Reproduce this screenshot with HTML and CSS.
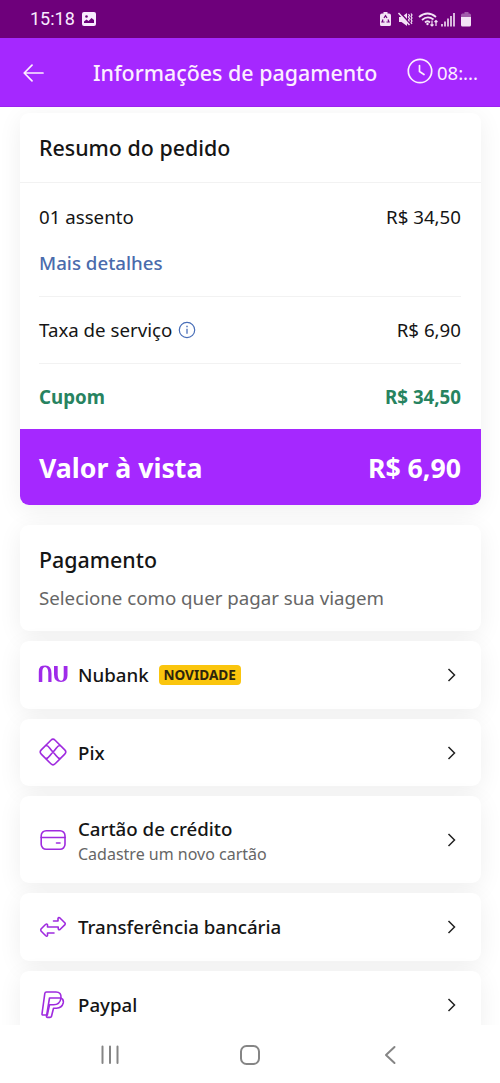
FILE: index.html
```html
<!DOCTYPE html>
<html lang="pt-BR">
<head>
<meta charset="utf-8">
<title>Informações de pagamento</title>
<link rel="stylesheet" href="styles.css">
</head>
<body>
<div class="screen">
  <header class="status">
    <span class="time">15:18</span>
    <svg class="gallery" width="14" height="14" viewBox="0 0 14 14"><rect width="14" height="14" rx="2" fill="#f8eaff"/><circle cx="4.5" cy="4.5" r="1.3" fill="#6e007b"/><path d="M2 11V9.500L4.500 7.500L6.500 9L9.500 6L12 8V11Z" fill="#6e007b"/></svg>
    <svg class="indicators" width="94" height="18" viewBox="0 0 94 18" fill="none" stroke="#f3e3f6">
      <path d="M3 2.500H4.500V1H8.500V2.500H10Q12 2.500 12 4.500V13.500Q12 15 10.500 15H2.500Q1 15 1 13.500V4.500Q1 2.500 3 2.500Z" fill="#f3e3f6" stroke="none"/>
      <path d="M5 7L6.500 4.700L8 7M9 8.500L10 11H7.500M5.500 11H3L4 8.500" stroke="#6e007b" stroke-width="1.200"/>
      <path d="M20 6H22.500L28 2V15L22.500 11H20Z" fill="#f3e3f6" stroke="none"/><path d="M20.500 1L32 13.500" stroke="#6e007b" stroke-width="1.800"/><path d="M19.500 2L30.500 14" stroke-width="1.500"/><path d="M29.500 3L30.500 4.500L29.500 6L30.500 7.500L29.500 9L30.500 10.500M32 2.500L33 4L32 5.500L33 7L32 8.500L33 10L32 11.500L33 13" stroke-width="1.200"/>
      <path d="M40 6Q48.500-1 57 6M43 9Q48.500 4 54.500 8.500M46 11.500Q48.500 9 51 11.500" stroke-width="1.800"/><circle cx="48.500" cy="13" r="1.200" fill="#f3e3f6" stroke="none"/><path d="M53 9.500V15M51.500 13.500L53 15L54.500 13.500M57 15V9.500M55.500 11L57 9.500L58.500 11" stroke-width="1.200"/>
      <path d="M63 13V15.500M66 10.500V15.500M69 7.500V15.500M72 5V15.500M75 2V15.500" stroke-width="1.600"/>
      <path d="M83.500 2.500H85.500V1H89.500V2.500H90.500Q92 2.500 92 4V6H82V4Q82 2.500 83.500 2.500Z" fill="#a15aab" stroke="none"/><path d="M82 6H92V14Q92 15.500 90.500 15.500H83.500Q82 15.500 82 14Z" fill="#f3e3f6" stroke="none"/>
    </svg>
  </header>
  <div class="appbar">
    <svg class="back" width="22" height="18" viewBox="0 0 22 18" fill="none" stroke="#fceeff" stroke-width="1.700" stroke-linecap="round" stroke-linejoin="round"><path d="M20 9H1.500M9 1.200L1.200 9L9 16.800"/></svg>
    <h1 class="title">Informações de pagamento</h1>
    <svg class="clock" width="26" height="26" viewBox="0 0 26 26" fill="none" stroke="#fceeff" stroke-width="1.700" stroke-linecap="round" stroke-linejoin="round"><circle cx="13" cy="13" r="11.700"/><path d="M12.500 7.500V13.500L17 16.500"/></svg>
    <span class="timer">08:...</span>
  </div>
  <main class="content">
    <section class="card summary">
      <h2 class="heading">Resumo do pedido</h2>
      <div class="lines">
        <div class="line seat">
          <div class="row"><span>01 assento</span><span>R$ 34,50</span></div>
          <a class="details">Mais detalhes</a>
        </div>
        <div class="line row fee"><span class="label">Taxa de serviço
          <svg width="18" height="18" viewBox="0 0 18 18" fill="none" stroke="#4a6fb8"><circle cx="9" cy="9" r="7.700" stroke-width="1.200"/><path d="M9 7.800V12.800" stroke-width="1.300"/><path d="M9 4.800V6.200" stroke-width="1.400"/></svg></span><span>R$ 6,90</span></div>
        <div class="line row coupon"><span>Cupom</span><span>R$ 34,50</span></div>
      </div>
      <div class="total row"><span>Valor à vista</span><span>R$ 6,90</span></div>
    </section>
    <section class="card intro">
      <h2 class="heading-plain">Pagamento</h2>
      <p class="hint">Selecione como quer pagar sua viagem</p>
    </section>
    <div class="methods">
      <div class="card method">
        <svg class="icon" width="30" height="30" viewBox="0 0 30 30" fill="#9f2be9"><path d="M.8 22V12Q.8 8 2.500 6.500Q4 5.500 7.500 5.500Q13.500 5.500 13.500 13.500V22H10.300V12.500Q10 7.300 7 7Q4.300 7.500 4.300 12V22Z"/><path d="M16 6H19.700V15Q20 20.500 23 20.800Q25.700 20.500 25.700 16V6H29.500V15.500Q29.500 22 23 22Q16 22 16 14.500Z"/></svg>
        <span class="name">Nubank</span><span class="badge">NOVIDADE</span>
        <svg class="chevron" width="10" height="14" viewBox="0 0 10 14"><path d="M1.500 1L7.500 7L1.500 13"/></svg>
      </div>
      <div class="card method">
        <svg class="icon line-icon pix-icon" width="30" height="30" viewBox="0 0 30 30"><rect x="5.200" y="5.200" width="19.600" height="19.600" rx="3" transform="rotate(45 15 15)"/><path d="M8 8.500C11 8.500 11 11 15 15C19 19 19 21.500 22 21.500M22 8.500C19 8.500 19 11 15 15C11 19 11 21.500 8 21.500"/></svg>
        <span class="name">Pix</span>
        <svg class="chevron" width="10" height="14" viewBox="0 0 10 14"><path d="M1.500 1L7.500 7L1.500 13"/></svg>
      </div>
      <div class="card method tall">
        <svg class="icon line-icon" width="30" height="30" viewBox="0 0 30 30"><rect x="3.200" y="5.700" width="23.800" height="18.600" rx="5"/><path d="M3.200 12.500H27M18.500 18H22"/></svg>
        <div class="stack"><span class="name">Cartão de crédito</span><span class="sub">Cadastre um novo cartão</span></div>
        <svg class="chevron" width="10" height="14" viewBox="0 0 10 14"><path d="M1.500 1L7.500 7L1.500 13"/></svg>
      </div>
      <div class="card method">
        <svg class="icon line-icon" width="30" height="30" viewBox="0 0 30 30"><path d="M15.500 9H20V6.600Q20 5 21.700 5.800L27 11Q27.500 11.800 27 12.600L22 17.500Q20.200 18.500 20.200 16V15H9.500V12.800Q9 11.300 7.500 12.500L3 17Q2.500 18 3 19L7.500 23.500Q9.200 25 9.500 23.300V21H16"/></svg>
        <span class="name">Transferência bancária</span>
        <svg class="chevron" width="10" height="14" viewBox="0 0 10 14"><path d="M1.500 1L7.500 7L1.500 13"/></svg>
      </div>
      <div class="card method">
        <svg class="icon line-icon" width="30" height="30" viewBox="0 0 30 30"><path d="M8.500 2H18Q23.500 2 23 8Q22 14.800 15.500 14.800H11.500L9.300 25H5Q3.800 25 4 23.800L6.800 3.500Q7 2 8.500 2Z"/><path d="M11.500 8H22.500Q26 9 25.200 13Q24 18 18.500 18.200H15.500L13.500 26.200Q13.200 27.400 12 27.400H9.500Q8.300 27.400 8.500 26.200Z"/></svg>
        <span class="name">Paypal</span>
        <svg class="chevron" width="10" height="14" viewBox="0 0 10 14"><path d="M1.500 1L7.500 7L1.500 13"/></svg>
      </div>
    </div>
  </main>
  <nav class="nav">
    <svg width="20" height="20" viewBox="0 0 20 20"><path d="M2.500 1.500V18M10 1.500V18M17.500 1.500V18"/></svg>
    <svg width="20" height="20" viewBox="0 0 20 20"><rect x="1" y="1" width="18" height="18" rx="5.500"/></svg>
    <svg width="20" height="20" viewBox="0 0 20 20"><path d="M14.500 2L6 10L14.500 18"/></svg>
  </nav>
</div>
</body>
</html>
```
FILE: styles.css
```css
* { box-sizing: border-box; }
body { margin: 0; background: #fff; }
h1, h2, p { margin: 0; font-weight: 500; }
svg { display: block; flex: none; }

.screen {
  display: flex;
  flex-direction: column;
  width: 500px;
  height: 1083px;
  overflow: hidden;
  font-family: "Noto Sans", sans-serif;
  font-size: 18.700px;
  color: #151515;
  white-space: nowrap;
}

.status {
  display: flex;
  flex: none;
  align-items: center;
  height: 38px;
  padding: 0 27px 0 30px;
  background: #6e007b;
  color: #f8eaff;
  font-family: Roboto, sans-serif;
  font-size: 18px;
}
.gallery { margin-left: 8px; }
.time { width: 44px; margin-top: -1px; }
.indicators { margin-left: auto; margin-top: 1px; }

.appbar {
  display: flex;
  flex: none;
  align-items: center;
  height: 69px;
  padding: 0 20px 0 23px;
  background: #a528ff;
  border-bottom: 1px solid #9a24ee;
  color: #fceeff;
}
.back { margin-top: 1px; }
.title { width: 285px; margin-left: 48px; font-size: 21.400px; }
.clock { margin-left: 29px; margin-top: -2px; }
.timer { margin-left: 4px; font-size: 18.500px; }

.content {
  flex: 1;
  min-height: 0;
  overflow: hidden;
  padding: 6px 19.500px 0;
}
.card {
  border-radius: 9px;
  background: #fff;
  box-shadow: 0 5px 24px rgba(0, 0, 0, .065);
}
.summary { height: 392px; overflow: hidden; }
.heading {
  height: 70px;
  padding-left: 19.500px;
  border-bottom: 1px solid #f2f2f2;
  font-size: 21.400px;
  line-height: 70px;
}
.row { display: flex; align-items: center; justify-content: space-between; }
.lines { height: 246px; padding: 0 19.500px; }
.seat { height: 113px; padding-top: 20px; line-height: 28px; }
.line + .line { border-top: 1px solid #f2f2f2; }
.details { display: block; margin-top: 18px; color: #4a6bac; font-weight: 500; }
.label { display: flex; align-items: center; gap: 6px; }
.fee { height: 67px; padding-bottom: 1px; }
.coupon { height: 67px; padding-bottom: 2px; color: #278360; font-weight: 700; }
.total {
  height: 76px;
  padding: 0 19.500px;
  background: #a528ff;
  color: #fff;
  font-size: 26.700px;
  font-weight: 700;
}
.intro { height: 106px; margin-top: 20px; padding: 20px 19.500px; }
.heading-plain { font-size: 21.400px; line-height: 30px; }
.hint { margin-top: 10px; color: #666; font-size: 18.700px; font-weight: 400; line-height: 26px; }

.methods { display: flex; flex-direction: column; gap: 10px; margin-top: 10px; }
.method { display: flex; flex: none; align-items: center; height: 67.700px; padding: 0 23.500px 0 18.500px; }
.tall { height: 87px; }
.icon { margin-right: 10px; }
.pix-icon { position: relative; top: -1px; }
.line-icon { fill: none; stroke: #9f2bdf; stroke-width: 1.600; stroke-linecap: round; stroke-linejoin: round; }
.name { font-size: 18.700px; font-weight: 500; line-height: 26px; }
.badge {
  width: 82px;
  height: 20px;
  margin-left: 10px;
  border-radius: 4px;
  background: #fac50d;
  color: #2d240c;
  font-size: 13.600px;
  font-weight: 700;
  line-height: 20px;
  text-align: center;
}
.stack { display: flex; flex-direction: column; margin-top: 3px; }
.sub { color: #666; font-size: 16px; line-height: 24px; }
.chevron { margin-left: auto; fill: none; stroke: #222; stroke-width: 1.500; }

.nav {
  display: flex;
  flex: none;
  align-items: center;
  justify-content: space-between;
  height: 58px;
  padding: 2px 100px 0;
  background: #fff;
}
.nav svg { fill: none; stroke: #858585; stroke-width: 2; stroke-linecap: round; stroke-linejoin: round; }
```
